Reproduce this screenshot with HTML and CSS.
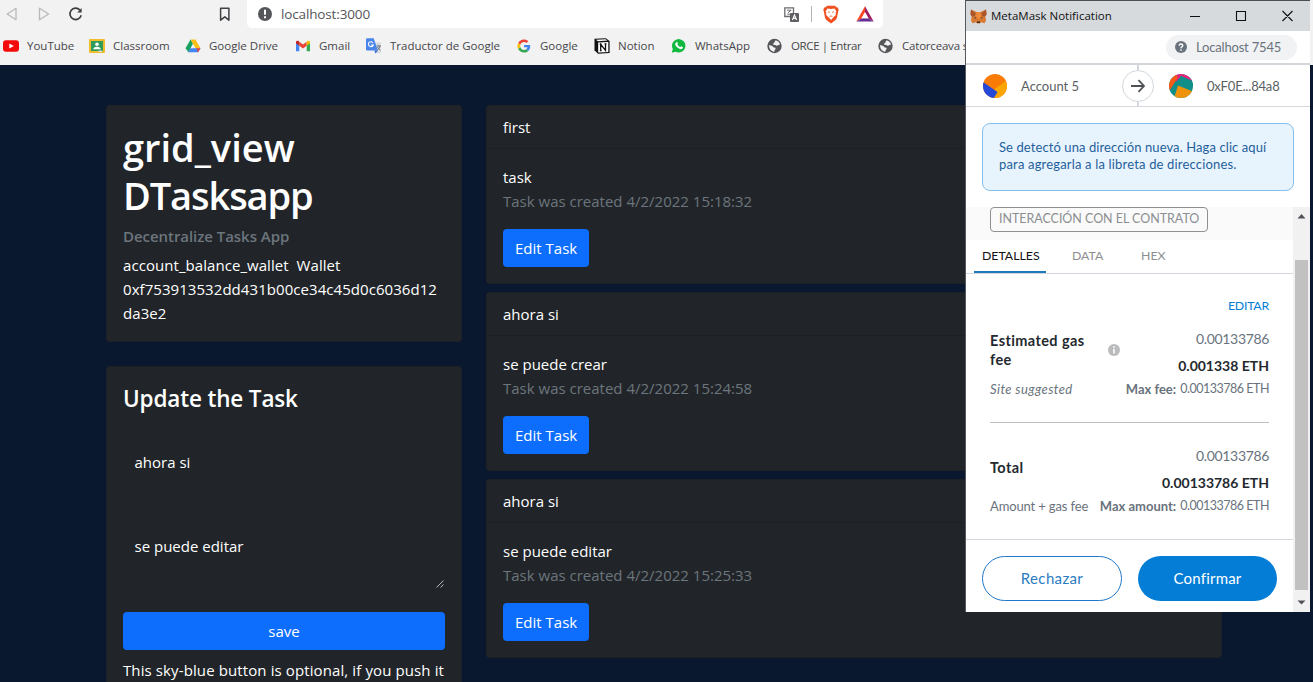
FILE: index.html
```html
<!DOCTYPE html>
<html lang="es">
<head>
<meta charset="utf-8">
<title>DTasksapp</title>
<link rel="stylesheet" href="styles.css">
</head>
<body>
<header class="chrome">
  <div class="toolbar">
    <svg class="nav back" width="12" height="14" viewBox="0 0 12 14"><path d="M10 1.2v11.6L1.2 7z" fill="none" stroke="#b9b9bb" stroke-width="1.3" stroke-linejoin="round"/></svg>
    <svg class="nav fwd" width="12" height="14" viewBox="0 0 12 14"><path d="M1.5 1.2v11.6L10.6 7z" fill="none" stroke="#b9b9bb" stroke-width="1.3" stroke-linejoin="round"/></svg>
    <svg class="nav reload" width="16" height="16" viewBox="0 0 16 16"><path d="M13.2 9.3A5.700 5.700 0 1 1 11.800 3.900" fill="none" stroke="#3c3d40" stroke-width="1.6"/><path d="M13.600 2v4.400H9.200z" fill="#3c3d40"/></svg>
    <svg class="nav mark" width="12" height="15" viewBox="0 0 12 15"><path d="M1.6 1.2h8.3v12L5.8 9.8l-4.2 3.4z" fill="none" stroke="#3f4044" stroke-width="1.5" stroke-linejoin="round"/></svg>
    <div class="address">
      <svg width="14" height="14" viewBox="0 0 14 14"><circle cx="7" cy="7" r="7" fill="#55565a"/><path d="M6 2.8h2v5H6zM6 9.3h2v2H6z" fill="#fff"/></svg>
      <span class="url">localhost:3000</span>
      <svg class="translate" width="15" height="15" viewBox="0 0 15 15"><path d="M.8.8h8.7v8.7H.8z" fill="#fff" stroke="#6b6c70" stroke-width="1.3"/><path d="M3 3.2h4.4M3.8 5.8 7 3.4M3.4 7.2h3" stroke="#6b6c70" fill="none"/><rect x="6" y="6" width="9" height="9" rx="1" fill="#5f6064"/><path d="m8.4 13 2.1-5 2.1 5M9.2 11.4h2.6" stroke="#fff" fill="none" stroke-width="1.1"/></svg>
      <i class="sep"></i>
      <svg class="brave" width="16" height="19" viewBox="0 0 16 19"><path d="M4 .7h8l1.3 1.5 1.5.2.9 2.6-.5 1.2-1.2 6.6q-.4 1.5-1.7 2.4L8 18.6l-4.3-3.4Q2.400 14.300 2 12.800L.8 6.200.3 5l.9-2.600 1.500-.2z" fill="#f0501f"/><path d="m4.600 3.400 3.400.6 3.400-.6 2 2.800-.7 1.600.1 2.300-2.600 2.500-2.200 2.300-2.200-2.300-2.600-2.500.1-2.300-.7-1.600z" fill="#fff"/><path d="m4.900 6.800 1.900.6M11.100 6.800l-1.900.6M6.600 11.500 8 10.900l1.400.6" stroke="#f0501f" fill="none" stroke-width=".8"/></svg>
      <svg class="bat" width="18" height="16" viewBox="0 0 18 16"><path d="M9 .3.300 15.500 6 12.200 9 6.500z" fill="#ff4724"/><path d="M9 .3l8.700 15.200L12 12.200 9 6.500z" fill="#9e1f63"/><path d="M.3 15.500h17.400L12 12.200H6z" fill="#662d91"/><path d="M9 5.900 12.600 12.300H5.400z" fill="#fff"/></svg>
    </div>
  </div>
  <nav class="bookmarks">
    <a><svg width="16" height="16" viewBox="0 0 16 16"><rect y="2.300" width="16" height="11.400" rx="3" fill="#f50a0a"/><path d="m6.300 5.500 4.600 2.500-4.600 2.500z" fill="#fff"/></svg><span>YouTube</span></a>
    <a><svg width="16" height="16" viewBox="0 0 16 16"><rect y="1" width="16" height="14" rx="1" fill="#f1bd2a"/><rect x="2" y="3" width="12" height="10" fill="#2f9b5c"/><circle cx="8" cy="6.200" r="1.800" fill="#fff"/><path d="M4.200 11.300q.4-2.500 3.800-2.500t3.800 2.500z" fill="#fff"/><path d="M9.500 12.500h3.500V14H9.500z" fill="#ddd"/></svg><span>Classroom</span></a>
    <a><svg width="16" height="16" viewBox="0 0 16 16"><path d="M5.600 1.500 8 5.600 3.500 14.200.5 10.200z" fill="#18a15f"/><path d="M5.600 1.500h4.800L15.500 10.200h-4.900z" fill="#fbc016"/><path d="M5.500 10.200h10L13 14.200H3.200z" fill="#4285f4"/><path d="m11.400 10.200h4.100L13 14.200z" fill="#ea4335"/></svg><span>Google Drive</span></a>
    <a><svg width="16" height="16" viewBox="0 0 16 16"><path d="M1 13.300V4.500l3.300 2.300v6.500z" fill="#4285f4"/><path d="M11.700 13.300V6.800L15 4.500v8.800z" fill="#34a853"/><path d="M4.300 3.700 8 6.600l3.700-2.900v4.100L8 10.600 4.300 7.800z" fill="#ea4335"/><path d="M1 5.300V3.700q.6-1.500 2.200-.9l1.100.9v4.100z" fill="#c5221f"/><path d="M15 5.300V3.700q-.6-1.500-2.200-.9l-1.100.9v4.100z" fill="#fbbc04"/></svg><span>Gmail</span></a>
    <a><svg width="16" height="16" viewBox="0 0 16 16"><path d="M6.500 4.500h8.300v10.800H10z" fill="#d7dbe0"/><path d="M1.200.3h6.500L11.900 12.400H1.200Q0 12.400 0 11.200V1.500Q0 .3 1.200.3z" fill="#4a86ea"/><path d="M8.400 12.400h3.500l-2.500 3z" fill="#3567d6"/><path d="M7 4.800A2.500 2.500 0 1 0 7.300 7H5" fill="none" stroke="#fff" stroke-width="1.100"/><path d="M10.800 8h4M12.800 7v1.200M14.300 8.200q-1 2.500-3 3.800M11.500 9q1 2 3 3.200" fill="none" stroke="#687078" stroke-width=".9"/></svg><span>Traductor de Google</span></a>
    <a><svg width="14" height="14" viewBox="-2 -2 52 52" class="g"><path fill="#EA4335" d="M24 9.500c3.500 0 6.700 1.200 9.200 3.600l6.900-6.900C35.900 2.400 30.500 0 24 0 14.600 0 6.500 5.400 2.600 13.200l8 6.200C12.400 13.700 17.700 9.500 24 9.500z"/><path fill="#4285F4" d="M47 24.600c0-1.600-.2-3.100-.4-4.600H24v9h12.900c-.6 3-2.200 5.500-4.700 7.200l7.700 6C44.400 38 47 31.800 47 24.600z"/><path fill="#FBBC05" d="M10.500 28.600a14.500 14.500 0 0 1 0-9.200l-8-6.200a24 24 0 0 0 0 21.600z"/><path fill="#34A853" d="M24 48c6.500 0 11.900-2.100 15.900-5.800l-7.700-6c-2.200 1.500-4.900 2.300-8.200 2.300-6.300 0-11.600-4.200-13.500-9.900l-8 6.200C6.500 42.600 14.600 48 24 48z"/></svg><span>Google</span></a>
    <a><svg width="16" height="16" viewBox="0 0 16 16"><path d="M.5.8 11.800.2 15.600 3v12L4 15.800.5 12.300z" fill="#111"/><path d="m2 1.700 9.500-.5 2 1.400-9.500.6zM4.200 4.600l10.100-.6v10l-10.100.6z" fill="#fff"/><path d="M6.700 12.800V6.300l4.800 6V5.800M5.700 6.200h2M5.900 12.700h1.700M10.500 5.900h2" stroke="#111" fill="none" stroke-width="1.300"/></svg><span>Notion</span></a>
    <a><svg width="16" height="16" viewBox="0 0 16 16"><path d="m.8 14.700 1-3.700a6.700 6.700 0 1 1 2.700 2.700z" fill="#12b83e"/><path d="M5.300 4.200q.9-.5 1.300.6.600 1.100-.2 1.700.9 1.900 2.900 2.700.7-1.200 1.500-.7 1.600.7 1 1.500-.9 1.700-3 1.100-3.400-1.100-4.600-4.300-.3-1.600 1.100-2.600z" fill="#fff"/></svg><span>WhatsApp</span></a>
    <a><svg width="16" height="16" viewBox="0 0 16 16"><circle cx="7.500" cy="8" r="7.200" fill="#55565a"/><path d="M8.800 2.200q3.200.9 4.400 4L10.500 7.600q-1.200.6-2.100-.5l-2.200-.4q-.6-1.400 1-1.700.2-1.600 1.600-2.800zM1.900 7.100l3.500 1 .9 1.200 2 .4q1 1.200-.6 2.200l-.5 2Q2.300 13.100 1.900 7.100z" fill="#f2f2f2"/></svg><span class="tight">ORCE | Entrar</span></a>
    <a><svg width="16" height="16" viewBox="0 0 16 16"><circle cx="7.500" cy="8" r="7.200" fill="#55565a"/><path d="M8.800 2.200q3.200.9 4.400 4L10.500 7.600q-1.200.6-2.100-.5l-2.200-.4q-.6-1.400 1-1.700.2-1.600 1.600-2.800zM1.900 7.100l3.500 1 .9 1.200 2 .4q1 1.200-.6 2.200l-.5 2Q2.300 13.100 1.900 7.100z" fill="#f2f2f2"/></svg><span class="last">Catorceava s</span></a>
  </nav>
</header>

<main class="page">
  <section class="side">
    <div class="card intro">
      <h1><span>grid_view</span><br><span class="name">DTasksapp</span></h1>
      <h6><span>Decentralize Tasks App</span></h6>
      <p class="wallet"><span>account_balance_wallet&nbsp; Wallet</span><br><span>0xf753913532dd431b00ce34c45d0c6036d12</span><br><span>da3e2</span></p>
    </div>
    <div class="card form">
      <h4><span>Update the Task</span></h4>
      <div class="field"><span>ahora si</span></div>
      <div class="field area"><span>se puede editar</span>
        <svg width="8" height="8" viewBox="0 0 8 8"><path d="M.5 7.500 7.500.5M4.500 7.500l3-3" stroke="#c9cacb" fill="none" stroke-width=".9"/></svg>
      </div>
      <button class="btn save"><span>save</span></button>
      <p class="note"><span>This sky-blue button is optional, if you push it</span></p>
    </div>
  </section>
  <section class="tasks">
    <article class="card">
      <div class="head"><span>first</span></div>
      <div class="body"><p><span>task</span></p><p class="muted"><span>Task was created 4/2/2022 15:18:32</span></p><button class="btn"><span>Edit Task</span></button></div>
    </article>
    <article class="card">
      <div class="head"><span>ahora si</span></div>
      <div class="body"><p><span>se puede crear</span></p><p class="muted"><span>Task was created 4/2/2022 15:24:58</span></p><button class="btn"><span>Edit Task</span></button></div>
    </article>
    <article class="card">
      <div class="head"><span>ahora si</span></div>
      <div class="body"><p><span>se puede editar</span></p><p class="muted"><span>Task was created 4/2/2022 15:25:33</span></p><button class="btn"><span>Edit Task</span></button></div>
    </article>
  </section>
</main>

<aside class="popup">
  <div class="titlebar">
    <svg width="17" height="15" viewBox="0 0 18 16"><path d="m1 .6 6 2.600h4L17 .6l.6 5L16.200 8l.9 3.600-1.600 3.600-3.700-1-1.500 1.300H7.700l-1.500-1.300-3.700 1L.9 11.600 1.800 8 .4 5.600z" fill="#d97a33"/><path d="m1 .6 5 3.800L4.800 8 1.800 8 .4 5.600zM17 .6l-5 3.800L13.200 8l3 0 1.400-2.400z" fill="#a9562c"/><path d="m7 3.200-.6 5L9 11l2.600-2.800-.6-5z" fill="#ed8a3a"/><path d="m4.700 8.600 2.300 1-2 .6zM13.300 8.600l-2.300 1 2 .6z" fill="#28303a"/><path d="M7.400 13.200h3.200l.2 1.800H7.200z" fill="#3b2a24"/></svg>
    <span class="title">MetaMask Notification</span>
    <svg class="winctl" width="104" height="12" viewBox="0 0 104 12"><path d="M0 6.500h10M46.500 1.500h9v9h-9zM92.500 1l10 10m0-10-10 10" fill="none" stroke="#111" stroke-width="1.100"/></svg>
  </div>
  <div class="network"><div class="pill"><svg width="12" height="12" viewBox="0 0 12 12"><circle cx="6" cy="6" r="6" fill="#6a737d"/><path d="M4.200 4.700q0-1.700 1.800-1.700t1.800 1.500q0 .8-.9 1.300Q6 6.200 6 7.200M6 8.200v1.500" stroke="#fff" stroke-width="1.400" fill="none"/></svg><span>Localhost 7545</span></div></div>
  <div class="accounts">
    <svg class="ident" width="24" height="24" viewBox="0 0 24 24"><defs><clipPath id="c"><circle cx="12" cy="12" r="12"/></clipPath></defs><g clip-path="url(#c)"><rect width="24" height="24" fill="#f97c06"/><path d="m12 14.500 12-8v18H10z" fill="#fca503"/><path d="m0 8 14.500 10L11 24H0z" fill="#2448d8"/></g></svg>
    <span class="from">Account 5</span>
    <div class="divider"><i></i><div class="arrow"><svg width="14" height="14" viewBox="0 0 14 14"><path d="M0 7h13M7.500 1.200 13 7l-5.500 5.800" fill="none" stroke="#4d5156" stroke-width="1.800"/></svg></div><i></i></div>
    <svg class="ident" width="24" height="24" viewBox="0 0 24 24"><g clip-path="url(#c)"><rect width="24" height="24" fill="#0f8f88"/><path d="M5 0h19v8L12 2 7 8z" fill="#e9237c"/><path d="M0 0h7L8.500 4 1 16H0z" fill="#f45b16"/><path d="m12 2 12 5v5L9 12z" fill="#0f8f88"/><path d="m9 11.500 15 6V24H5z" fill="#ee930b"/></g></svg>
    <span class="to">0xF0E...84a8</span>
  </div>
  <div class="alertwrap"><div class="alert"><span>Se detectó una dirección nueva. Haga clic aquí</span><br><span class="second">para agregarla a la libreta de direcciones.</span></div></div>
  <div class="scroller">
    <div class="content">
      <div class="summary"><div class="tag"><span>INTERACCIÓN CON EL CONTRATO</span></div></div>
      <div class="tabs"><div class="tab on"><span>DETALLES</span></div><div class="tab"><span>DATA</span></div><div class="tab"><span>HEX</span></div></div>
      <div class="details">
        <div class="edit"><span>EDITAR</span></div>
        <div class="row gas">
          <div class="left"><div class="label">
            <b><span>Estimated gas</span><br><span>fee</span></b>
            <svg width="12" height="12" viewBox="0 0 12 12"><circle cx="6" cy="6" r="6" fill="#b9bbbd"/><path d="M5.200 2.300h1.600v1.600H5.200zM5.200 5h1.600v4.600H5.200z" fill="#fff"/></svg>
          </div><em><span>Site suggested</span></em></div>
          <div class="right"><div class="fiat"><span>0.00133786</span></div><div class="eth"><span>0.001338 ETH</span></div><div class="max"><b><span>Max fee:</span></b><span>0.00133786 ETH</span></div></div>
        </div>
        <div class="row total">
          <div class="left"><b class="tot"><span>Total</span></b><div class="sub"><span>Amount + gas fee</span></div></div>
          <div class="right"><div class="fiat"><span>0.00133786</span></div><div class="eth"><span>0.00133786 ETH</span></div><div class="max"><b><span>Max amount:</span></b><span>0.00133786 ETH</span></div></div>
        </div>
      </div>
      <div class="footer"><button class="pillbtn reject"><span>Rechazar</span></button><button class="pillbtn confirm"><span>Confirmar</span></button></div>
    </div>
    <div class="scrollbar"><svg width="9" height="5" viewBox="0 0 9 5"><path d="M4.500 0 8.500 4.500h-8z" fill="#4f5256"/></svg><i></i><svg width="9" height="5" viewBox="0 0 9 5"><path d="M.5.500h8l-4 4z" fill="#4f5256"/></svg></div>
  </div>
</aside>
</body>
</html>
```
FILE: styles.css
```css
* { box-sizing: border-box; }
html, body { height: 100%; }
body {
  margin: 0;
  overflow: hidden;
  background: #09182e;
  color: #fff;
  font: 15px/24px "Open Sans", sans-serif;
}
h1, h4, h6, p { margin: 0; }
button { border: 0; font: inherit; color: inherit; letter-spacing: inherit; }
svg { display: block; flex: none; }
span { white-space: nowrap; }

/* browser chrome */
.chrome { height: 65px; background: #f2f2f2; color: #46474a; }
.toolbar { height: 28px; display: flex; align-items: center; padding-left: 6px; }
.fwd { margin-left: 20px; }
.reload { margin-left: 18px; }
.mark { margin-left: 135px; margin-right: 16px; }
.address {
  width: 636px; height: 28px; padding: 0 9px 0 11px;
  display: flex; align-items: center;
  background: #fff; border-radius: 0 0 5px 5px; font-size: 13.5px;
}
.url { margin-left: 9px; color: #55565a; letter-spacing: -.14px; }
.translate { margin-left: auto; }
.sep { width: 1px; height: 16px; margin: 0 11px 0 12px; background: #b4b4b6; }
.bat { margin-left: 17px; }
.bookmarks {
  height: 36px; padding-left: 3px; font-size: 11.5px;
  display: grid; align-items: center;
  grid-template-columns: 86px 96px 110px 71px 150px 78px 77px 96px 111px 90px;
}
.bookmarks a { display: flex; align-items: center; gap: 8px; }
.bookmarks .tight { letter-spacing: -.38px; }
.bookmarks .last { letter-spacing: -.2px; }
.g { margin: 0 1px; }

/* task page */
.page { height: 617px; overflow: hidden; display: flex; gap: 24px; padding: 40px 0 0 106px; }
.side { width: 356px; display: flex; flex-direction: column; gap: 24px; }
.card { background: #212529; border: 1px solid #1d2126; border-radius: 3px; }
.intro { height: 237px; padding: 17px 16px 16px; flex: none; }
h1 { font-size: 38px; line-height: 48px; font-weight: 600; }
.name { letter-spacing: -1.1px; }
h6 { margin: 8px 0 7px; font-size: 15px; line-height: 19px; font-weight: 600; color: #6c757d; letter-spacing: -.05px; }
.wallet { letter-spacing: .06px; }
.form { height: 360px; padding: 17px 16px 16px; flex: none; }
h4 { font-size: 22.500px; line-height: 29px; font-weight: 600; letter-spacing: -.15px; }
.field { height: 38px; margin-top: 30px; padding: 7px 11.5px; }
.area { position: relative; height: 62px; margin-top: 46px; }
.area svg { position: absolute; right: 1px; bottom: 1px; }
.btn {
  height: 38px; padding: 0 12px; border-radius: 4px;
  background: #0d6efd; color: #fff;
}
.save { display: block; width: 322px; margin: 23px 0 8px; }
.note { letter-spacing: .11px; }
.tasks { width: 736px; display: flex; flex-direction: column; gap: 8px; }
.tasks .card { height: 179px; flex: none; }
.head { height: 43px; padding: 9px 16px; border-bottom: 1px solid #1d2126; }
.body { padding: 16px; }
.muted { color: #6c757d; }
.tasks .btn { display: block; width: 86px; margin-top: 16px; }

/* wallet window */
.popup {
  position: absolute; left: 965px; top: 0; width: 345px; height: 612px;
  border-left: 1px solid #55585c; border-top: 1px solid #4a4d51;
  background: #fff; color: #24292e;
  font-family: Lato, sans-serif; font-size: 13px; line-height: 18px;
}
.titlebar {
  height: 30px; padding-left: 4px; display: flex; align-items: center;
  background: #d6dadd; color: #111; font-family: "Open Sans", sans-serif; font-size: 11.5px;
}
.title { margin-left: 4px; }
.winctl { margin: 0 16px 0 auto; }
.network { height: 34px; padding: 4px 13px 0 0; border-bottom: 2px solid #d2d6da; }
.pill {
  width: 131px; height: 25px; margin-left: auto; padding: 0 0 2px 9px;
  display: flex; align-items: center; gap: 9px;
  background: #f1f2f4; border-radius: 13px; color: #6a737d; letter-spacing: -.18px;
}
.accounts {
  height: 42px; padding-left: 17px; display: flex; align-items: center;
  border-bottom: 1px solid #d6d9dc; color: #5b5f64;
}
.from { width: 101px; margin-left: 14px; }
.divider { height: 41px; margin-right: 15px; display: flex; flex-direction: column; align-items: center; }
.divider i { flex: 1; width: 2px; background: #d2d8dd; }
.arrow {
  width: 32px; height: 32px; display: grid; place-items: center;
  border: 1px solid #d2d8dd; border-radius: 50%;
}
.to { margin-left: 14px; letter-spacing: -.18px; }
.alertwrap { height: 100px; padding: 16px; }
.alert {
  height: 68px; padding: 15px 16px; line-height: 17px; letter-spacing: .09px;
  background: #e8f4fd; border: 1px solid #84bfee; border-radius: 8px; color: #1f5f9c;
}
.alert .second { letter-spacing: .17px; }
.scroller { height: 405px; display: flex; }
.content { width: 327px; }
.summary { height: 33px; padding-left: 24px; background: #fafafa; }
.tag {
  width: 218px; height: 25px; padding-left: 8px; line-height: 22px; font-size: 12.5px;
  border: 1px solid #8e9194; border-radius: 4px; color: #8c8e91; letter-spacing: -.04px;
}
.tabs { height: 34px; padding-left: 8px; display: flex; border-bottom: 1px solid #d2d8dd; color: #8c8e91; font-size: 12.300px; }
.tab { height: 34px; padding: 7px 0 0 8px; width: 69px; }
.tab:nth-child(2) { margin-left: 18px; }
.on { width: 72px; height: 33px; border-bottom: 2px solid #1f78b8; color: #111; }
.details { height: 265px; padding: 23px 24px 0; color: #6a737d; }
.edit { text-align: right; color: #037dd6; font-size: 12.300px; letter-spacing: -.2px; }
.row { display: flex; justify-content: space-between; }
.gas { height: 108px; border-bottom: 1px solid #bbc0c5; }
.left { width: 130px; flex: none; padding-top: 16px; }
.right { flex: none; margin-left: -30px; }
.label { display: flex; align-items: center; justify-content: space-between; }
.left b { font-size: 14.500px; line-height: 19px; color: #24292e; letter-spacing: .4px; }
.left em { display: block; margin-top: 11px; letter-spacing: .42px; }
.right { padding-top: 15px; text-align: right; white-space: nowrap; }
.fiat { font-size: 14px; height: 27px; letter-spacing: -.34px; }
.eth { font-size: 14px; height: 23px; font-weight: 700; color: #24292e; }
.max { display: flex; justify-content: flex-end; gap: 4px; }
.max > span { font-size: 12.500px; letter-spacing: -.48px; }
.tot { display: block; margin-top: 19px; }
.total .right { padding-top: 24px; }
.sub { margin-top: 20px; letter-spacing: -.14px; }
.footer { height: 73px; padding: 16px; display: flex; gap: 16px; border-top: 1px solid #d2d8dd; }
.pillbtn { width: 140px; height: 45px; padding-bottom: 3px; border-radius: 23px; font-size: 15px; background: #fff; letter-spacing: .35px; }
.reject { border: 1px solid #1f78c8; color: #2c7cc0; }
.confirm { width: 139px; background: #037dd6; color: #fff; letter-spacing: .2px; }
.scrollbar { width: 17px; padding: 7px 2px; background: #f1f1f1; display: flex; flex-direction: column; align-items: center; }
.scrollbar i { width: 13px; height: 330px; margin: 41px 0 10px; background: #c1c1c1; }
```
